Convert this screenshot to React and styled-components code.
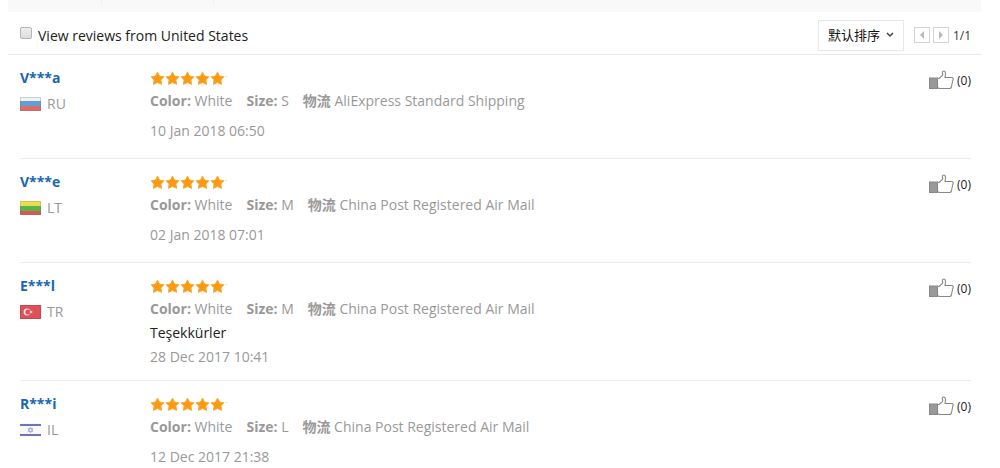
import React from "react";
import styled, { createGlobalStyle } from "styled-components";

const GlobalStyle = createGlobalStyle`
  *, *::before, *::after { box-sizing: border-box; }
  body {
    margin: 0;
    background: #fff;
    color: #333;
    font-family: "Open Sans", "Noto Sans CJK SC", sans-serif;
    font-size: 12px;
  }
`;

const Page = styled.main`
  padding: 0 19px 0 8px;
`;

const TabStrip = styled.div`
  display: flex;
  height: 12px;
  background: #f9f9f9;
`;

const TabEdge = styled.span`
  width: ${(p) => p.$width}px;
  height: 6px;
  border-right: 1px solid #f0f0f0;
`;

const Toolbar = styled.div`
  display: flex;
  align-items: center;
  justify-content: space-between;
  min-height: 43px;
  padding: 4px 10px 0 11px;
  border-bottom: 1px solid #e8e8e8;
`;

const FilterLabel = styled.label`
  display: flex;
  align-items: center;
  gap: 6px;
  font-size: 14px;
  color: #222;
`;

const Checkbox = styled.input`
  appearance: none;
  width: 12px;
  height: 12px;
  margin: 0 0 4px 1px;
  border: 1px solid #b5b5b5;
  border-radius: 2px;
  background: linear-gradient(#eee, #dcdcdc);

  &:checked { background: #1766b1; }
`;

const Controls = styled.div`
  display: flex;
  align-items: center;
  gap: 10px;
`;

const SortBox = styled.div`
  display: grid;
  align-items: center;
  width: 86px;
  height: 31px;

  & > * { grid-area: 1 / 1; }
  & > svg { justify-self: end; margin-right: 10px; pointer-events: none; }
`;

const SortSelect = styled.select`
  appearance: none;
  width: 100%;
  height: 100%;
  padding: 0 9px;
  border: 1px solid #e8e8e8;
  border-radius: 0;
  background: #fff;
  color: #111;
  font: inherit;
  font-size: 13px;
`;

const Pager = styled.nav`
  display: flex;
  align-items: center;
  gap: 3px;
`;

const PageButton = styled.button`
  display: flex;
  align-items: center;
  justify-content: center;
  width: 16px;
  height: 16px;
  padding: 0;
  border: 1px solid #d4d4d4;
  background: #fff;
`;

const PageCount = styled.span`
  margin-left: 1px;
`;

const ReviewList = styled.ul`
  margin: 0;
  padding: 0 10px 0 12px;
  list-style: none;
`;

const Review = styled.li`
  display: grid;
  grid-template-columns: 130px 1fr auto;
  min-height: 104px;
  padding: 12px 0 11px;
  border-bottom: 1px solid #ececec;
`;

const UserName = styled.a`
  display: block;
  color: #1766b1;
  font-size: 14px;
  font-weight: 700;
  line-height: 22px;
  text-decoration: none;
`;

const Country = styled.div`
  display: flex;
  align-items: center;
  gap: 6px;
  margin-top: 4px;
  color: #999;
  font-size: 14px;
  line-height: 22px;
`;

const Stars = styled.div`
  display: flex;
  align-items: center;
  height: 22px;
`;

const Details = styled.div`
  display: flex;
  flex-wrap: wrap;
  gap: 0 14px;
  color: #999;
  font-size: 14px;
  line-height: 24px;

  b { font-weight: 700; }
`;

const Feedback = styled.p`
  min-height: 6px;
  margin: 0;
  color: #222;
  font-size: 14px;
  line-height: 24px;
`;

const ReviewDate = styled.time`
  display: block;
  color: #999;
  font-size: 14px;
  line-height: 24px;
`;

const HelpfulButton = styled.button`
  display: flex;
  align-items: center;
  align-self: start;
  gap: 3px;
  height: 26px;
  padding: 0;
  border: 0;
  background: none;
  color: #222;
  font: inherit;
`;

const FlagIcon = ({ code }) => (
  <svg width="21" height="14" viewBox="0 0 21 14" aria-hidden="true">
    {code === "RU" && (
      <>
        <rect width="21" height="14" fill="#f0f2f5" />
        <rect y="4" width="21" height="5" fill="#5f9fd6" />
        <rect y="9" width="21" height="5" fill="#dc6c69" />
        <rect x=".5" y=".5" width="20" height="13" fill="none" stroke="#777" strokeOpacity=".3" />
      </>
    )}
    {code === "LT" && (
      <>
        <rect width="21" height="14" fill="#eddc52" />
        <rect y="5" width="21" height="5" fill="#54b548" />
        <rect y="10" width="21" height="4" fill="#d8574e" />
        <rect x=".5" y=".5" width="20" height="13" fill="none" stroke="#777" strokeOpacity=".25" />
      </>
    )}
    {code === "TR" && (
      <>
        <rect width="21" height="14" fill="#df5058" />
        <circle cx="7" cy="7" r="3.4" fill="#fbe4e4" />
        <circle cx="8" cy="7" r="2.6" fill="#df5058" />
        <path d="M9 7l1.4-.5V5l.9 1.2 1.4-.5L11.800 7l.9 1.300-1.400-.5L10.400 9V7.500z" fill="#fbe4e4" />
        <rect x=".5" y=".5" width="20" height="13" fill="none" stroke="#b43b43" strokeOpacity=".5" />
      </>
    )}
    {code === "IL" && (
      <>
        <rect width="21" height="14" fill="#f8f8fc" />
        <rect y="1" width="21" height="2" fill="#6d75b8" />
        <rect y="11" width="21" height="2" fill="#6d75b8" />
        <path d="M10.500 4.200l2.400 4.200H8.100zM10.500 9.800L8.100 5.600h4.800z" fill="none" stroke="#a0a6dc" strokeWidth=".8" />
      </>
    )}
  </svg>
);

const StarRow = () => (
  <svg width="78" height="15" viewBox="0 0 78 15" aria-hidden="true">
    {[0, 15, 30, 45, 60].map((x) => (
      <path
        key={x}
        transform={`translate(${x} 0)`}
        d="M7.500 1.100L9.600 5.100L13.900 5.800L10.900 8.900L11.600 13.400L7.500 11.500L3.400 13.400L4.100 8.900L1.100 5.800L5.400 5.100Z"
        fill="#fb9a10"
        stroke="#fbab3c"
        strokeLinejoin="round"
      />
    ))}
    <circle cx="76.500" cy="5.500" r=".6" fill="#e6bd8c" />
  </svg>
);

const ThumbIcon = () => (
  <svg width="25" height="20" viewBox="0 0 25 20" aria-hidden="true">
    <rect x=".5" y="8" width="8" height="10.500" fill="#999" stroke="#888" />
    <path
      d="M8.500 8.500H10L13.800 5.200L13.300 2.200Q13.600.8 15 1.100Q16.400 1.600 16.600 3.500L16 7.500H22.800Q24.600 7.800 24 9.500L22.400 17Q22 18.500 20.500 18.500H10.500L8.500 17.500Z"
      fill="#fff"
      stroke="#888"
      strokeWidth="1.100"
      strokeLinejoin="round"
    />
  </svg>
);

const reviews = [
  { user: "V***a", country: "RU", size: "S", shipping: "AliExpress Standard Shipping", date: "10 Jan 2018 06:50" },
  { user: "V***e", country: "LT", size: "M", shipping: "China Post Registered Air Mail", date: "02 Jan 2018 07:01" },
  { user: "E***l", country: "TR", size: "M", shipping: "China Post Registered Air Mail", text: "Teşekkürler", date: "28 Dec 2017 10:41" },
  { user: "R***i", country: "IL", size: "L", shipping: "China Post Registered Air Mail", date: "12 Dec 2017 21:38" },
];

export default function App() {
  return (
    <Page>
      <GlobalStyle />
      <TabStrip>
        <TabEdge $width={94} />
        <TabEdge $width={112} />
      </TabStrip>
      <Toolbar>
        <FilterLabel htmlFor="local-reviews">
          <Checkbox id="local-reviews" type="checkbox" />
          View reviews from United States
        </FilterLabel>
        <Controls>
          <SortBox>
            <SortSelect aria-label="默认排序" defaultValue="default">
              <option value="default">默认排序</option>
            </SortSelect>
            <svg width="8" height="6" viewBox="0 0 8 6" aria-hidden="true">
              <path d="M1 1l3 3 3-3" fill="none" stroke="#444" strokeWidth="1.500" />
            </svg>
          </SortBox>
          <Pager aria-label="Review pages">
            <PageButton type="button" aria-label="Previous page">
              <svg width="4" height="8" viewBox="0 0 4 8" aria-hidden="true">
                <path d="M4 0v8L0 4z" fill="#b8b8b8" />
              </svg>
            </PageButton>
            <PageButton type="button" aria-label="Next page">
              <svg width="4" height="8" viewBox="0 0 4 8" aria-hidden="true">
                <path d="M0 0v8l4-4z" fill="#b8b8b8" />
              </svg>
            </PageButton>
            <PageCount>1/1</PageCount>
          </Pager>
        </Controls>
      </Toolbar>
      <ReviewList>
        {reviews.map((r) => (
          <Review key={r.user}>
            <div>
              <UserName href="#profile">{r.user}</UserName>
              <Country>
                <FlagIcon code={r.country} />
                {r.country}
              </Country>
            </div>
            <div>
              <Stars role="img" aria-label="5 stars">
                <StarRow />
              </Stars>
              <Details>
                <span><b>Color:</b> White</span>
                <span><b>Size:</b> {r.size}</span>
                <span><b>物流</b> {r.shipping}</span>
              </Details>
              <Feedback>{r.text}</Feedback>
              <ReviewDate>{r.date}</ReviewDate>
            </div>
            <HelpfulButton type="button" aria-label="Helpful (0)">
              <ThumbIcon />
              (0)
            </HelpfulButton>
          </Review>
        ))}
      </ReviewList>
    </Page>
  );
}
